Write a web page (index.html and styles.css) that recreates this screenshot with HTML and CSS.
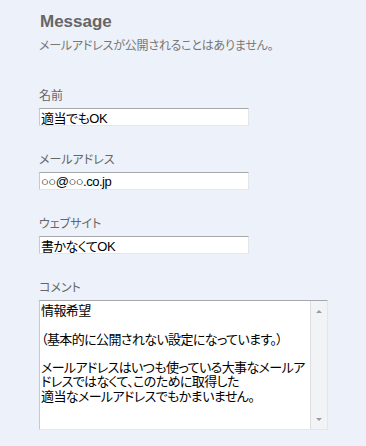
FILE: index.html
```html
<!DOCTYPE html>
<html lang="ja">
<head>
  <meta charset="UTF-8" />
  <title>Message</title>
  <link rel="stylesheet" href="styles.css">
</head>
<body>
  <form class="comment-form">
    <h2>Message</h2>
    <p class="note">メールアドレスが公開されることはありません。</p>

    <div class="field">
      <label for="author">名前</label>
      <input type="text" id="author" value="適当でもOK">
    </div>

    <div class="field">
      <label for="email">メールアドレス</label>
      <input type="text" id="email" value="○○@○○.co.jp">
    </div>

    <div class="field">
      <label for="url">ウェブサイト</label>
      <input type="text" id="url" value="書かなくてOK">
    </div>

    <div class="field">
      <label for="comment">コメント</label>
      <div class="textbox">
        <textarea id="comment" wrap="off">情報希望

（基本的に公開されない設定になっています。）

メールアドレスはいつも使っている大事なメールア
ドレスではなくて、このために取得した
適当なメールアドレスでもかまいません。</textarea>
        <div class="scrollbar">
          <span class="arrow up"></span>
          <span class="arrow down"></span>
        </div>
      </div>
    </div>
  </form>
</body>
</html>
```

FILE: styles.css
```css
/* Base */
* { margin: 0; padding: 0; box-sizing: border-box; }
body {
  background: #edf1f9;
  font-family: 'Liberation Sans', 'Noto Sans CJK JP', sans-serif;
  font-feature-settings: "palt";
  color: #666;
}

.comment-form {
  padding: 12px 0 0 39px;
}

h2 {
  font-size: 17px;
  line-height: 20px;
  font-weight: bold;
  color: #666;
  padding-left: 1px;
  margin-bottom: 6px;
}

.note {
  font-size: 12px;
  line-height: 16px;
  letter-spacing: -0.2px;
  color: #777;
  margin-bottom: 34px;
}

/* Fields */
.field { margin-bottom: 26px; }
.field label {
  display: block;
  font-size: 12px;
  line-height: 16px;
  color: #666;
  margin-bottom: 4px;
}

input[type="text"] {
  display: block;
  width: 210px;
  height: 18px;
  padding: 0 1px;
  font-family: inherit;
  font-feature-settings: "palt";
  font-size: 13px;
  letter-spacing: -0.5px;
  color: #000;
  background: #fff;
  border: 1px solid #e4e6ea;
  border-top-color: #a5a8ad;
  border-left-color: #c8cacf;
  outline: none;
}

/* Textarea with drawn scrollbar */
.textbox {
  display: flex;
  width: 289px;
  height: 130px;
  background: #fff;
  border: 1px solid #e4e6ea;
  border-top-color: #a5a8ad;
  border-left-color: #c8cacf;
}
.textbox textarea {
  flex: 1;
  min-width: 0;
  border: none;
  outline: none;
  resize: none;
  overflow: hidden;
  white-space: pre;
  padding: 3px 1px 1px;
  font-family: inherit;
  font-feature-settings: "palt";
  font-size: 13px;
  line-height: 14.3px;
  letter-spacing: -0.6px;
  color: #000;
}
.scrollbar {
  width: 17px;
  flex-shrink: 0;
  background: #f2f3f5;
  border-left: 1px solid #dcdee2;
  display: flex;
  flex-direction: column;
  justify-content: space-between;
  align-items: center;
  padding: 9px 0 8px;
}
.arrow {
  width: 0; height: 0;
  border-left: 3px solid transparent;
  border-right: 3px solid transparent;
}
.arrow.up { border-bottom: 3px solid #9a9ca0; }
.arrow.down { border-top: 3px solid #9a9ca0; }
```
